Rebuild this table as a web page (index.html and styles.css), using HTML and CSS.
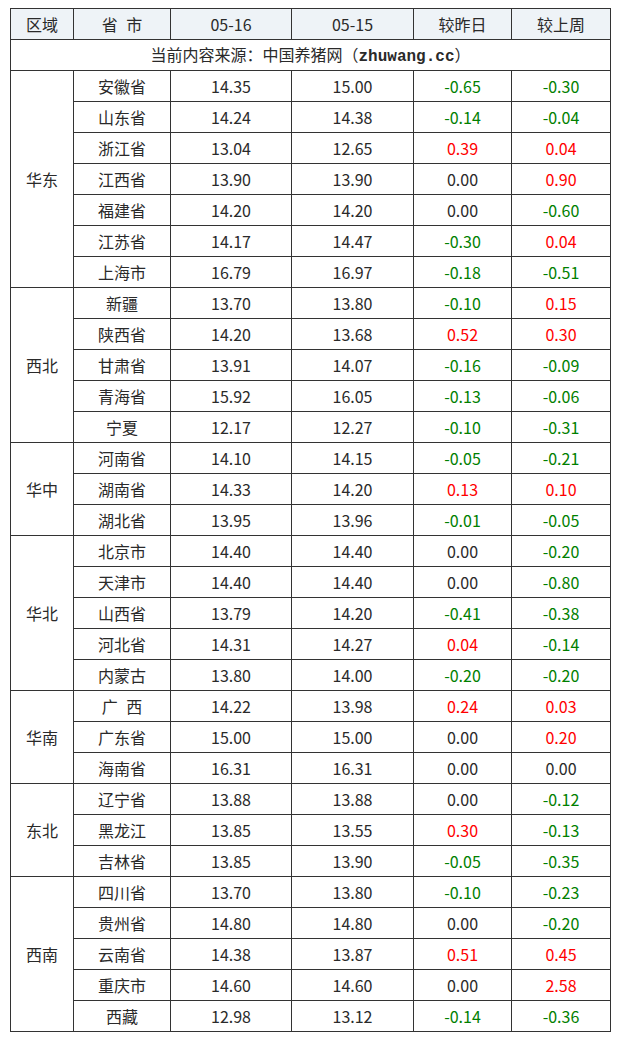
FILE: index.html
```html
<!DOCTYPE html>
<html lang="zh-CN">
<head>
<meta charset="utf-8">
<title>生猪价格</title>
<link rel="stylesheet" href="styles.css">
</head>
<body>
<div class="wrap">
<table class="price">
<colgroup>
<col class="c-region"><col class="c-prov"><col class="c-d1"><col class="c-d2"><col class="c-ch"><col class="c-wk">
</colgroup>
<thead>
<tr class="head"><th>区域</th><th>省 市</th><th>05-16</th><th>05-15</th><th>较昨日</th><th>较上周</th></tr>
</thead>
<tbody>
<tr><td colspan="6" class="source">当前内容来源：中国养猪网（<b class="site">zhuwang.cc</b>）</td></tr>

<tr><td rowspan="7" class="region">华东</td><td>安徽省</td><td>14.35</td><td>15.00</td><td class="down">-0.65</td><td class="down">-0.30</td></tr>
<tr><td>山东省</td><td>14.24</td><td>14.38</td><td class="down">-0.14</td><td class="down">-0.04</td></tr>
<tr><td>浙江省</td><td>13.04</td><td>12.65</td><td class="up">0.39</td><td class="up">0.04</td></tr>
<tr><td>江西省</td><td>13.90</td><td>13.90</td><td>0.00</td><td class="up">0.90</td></tr>
<tr><td>福建省</td><td>14.20</td><td>14.20</td><td>0.00</td><td class="down">-0.60</td></tr>
<tr><td>江苏省</td><td>14.17</td><td>14.47</td><td class="down">-0.30</td><td class="up">0.04</td></tr>
<tr><td>上海市</td><td>16.79</td><td>16.97</td><td class="down">-0.18</td><td class="down">-0.51</td></tr>

<tr><td rowspan="5" class="region">西北</td><td>新疆</td><td>13.70</td><td>13.80</td><td class="down">-0.10</td><td class="up">0.15</td></tr>
<tr><td>陕西省</td><td>14.20</td><td>13.68</td><td class="up">0.52</td><td class="up">0.30</td></tr>
<tr><td>甘肃省</td><td>13.91</td><td>14.07</td><td class="down">-0.16</td><td class="down">-0.09</td></tr>
<tr><td>青海省</td><td>15.92</td><td>16.05</td><td class="down">-0.13</td><td class="down">-0.06</td></tr>
<tr><td>宁夏</td><td>12.17</td><td>12.27</td><td class="down">-0.10</td><td class="down">-0.31</td></tr>

<tr><td rowspan="3" class="region">华中</td><td>河南省</td><td>14.10</td><td>14.15</td><td class="down">-0.05</td><td class="down">-0.21</td></tr>
<tr><td>湖南省</td><td>14.33</td><td>14.20</td><td class="up">0.13</td><td class="up">0.10</td></tr>
<tr><td>湖北省</td><td>13.95</td><td>13.96</td><td class="down">-0.01</td><td class="down">-0.05</td></tr>

<tr><td rowspan="5" class="region">华北</td><td>北京市</td><td>14.40</td><td>14.40</td><td>0.00</td><td class="down">-0.20</td></tr>
<tr><td>天津市</td><td>14.40</td><td>14.40</td><td>0.00</td><td class="down">-0.80</td></tr>
<tr><td>山西省</td><td>13.79</td><td>14.20</td><td class="down">-0.41</td><td class="down">-0.38</td></tr>
<tr><td>河北省</td><td>14.31</td><td>14.27</td><td class="up">0.04</td><td class="down">-0.14</td></tr>
<tr><td>内蒙古</td><td>13.80</td><td>14.00</td><td class="down">-0.20</td><td class="down">-0.20</td></tr>

<tr><td rowspan="3" class="region">华南</td><td>广 西</td><td>14.22</td><td>13.98</td><td class="up">0.24</td><td class="up">0.03</td></tr>
<tr><td>广东省</td><td>15.00</td><td>15.00</td><td>0.00</td><td class="up">0.20</td></tr>
<tr><td>海南省</td><td>16.31</td><td>16.31</td><td>0.00</td><td>0.00</td></tr>

<tr><td rowspan="3" class="region">东北</td><td>辽宁省</td><td>13.88</td><td>13.88</td><td>0.00</td><td class="down">-0.12</td></tr>
<tr><td>黑龙江</td><td>13.85</td><td>13.55</td><td class="up">0.30</td><td class="down">-0.13</td></tr>
<tr><td>吉林省</td><td>13.85</td><td>13.90</td><td class="down">-0.05</td><td class="down">-0.35</td></tr>

<tr><td rowspan="5" class="region">西南</td><td>四川省</td><td>13.70</td><td>13.80</td><td class="down">-0.10</td><td class="down">-0.23</td></tr>
<tr><td>贵州省</td><td>14.80</td><td>14.80</td><td>0.00</td><td class="down">-0.20</td></tr>
<tr><td>云南省</td><td>14.38</td><td>13.87</td><td class="up">0.51</td><td class="up">0.45</td></tr>
<tr><td>重庆市</td><td>14.60</td><td>14.60</td><td>0.00</td><td class="up">2.58</td></tr>
<tr><td>西藏</td><td>12.98</td><td>13.12</td><td class="down">-0.14</td><td class="down">-0.36</td></tr>
</tbody>
</table>
</div>
</body>
</html>
```

FILE: styles.css
```css
html, body {
  margin: 0;
  padding: 0;
  background: #ffffff;
}

.wrap {
  padding: 8px 0 0 10px;
}

.price {
  border-collapse: collapse;
  table-layout: fixed;
  width: 600px;
  font-family: "Noto Sans CJK SC", "Noto Sans", sans-serif;
  font-size: 16px;
  font-weight: 400;
  color: #2a2a2a;
  border: 1px solid #333333;
}

.c-region { width: 63px; }
.c-prov { width: 97px; }
.c-d1 { width: 121px; }
.c-d2 { width: 122px; }
.c-ch { width: 98px; }
.c-wk { width: 99px; }

.price th,
.price td {
  border: 1px solid #333333;
  height: 30px;
  padding: 0;
  text-align: center;
  vertical-align: middle;
  line-height: 20px;
  font-weight: 400;
  word-spacing: 5px;
}

.head th {
  background: #eef3f7;
}

.site {
  font-family: "Liberation Mono", "DejaVu Sans Mono", monospace;
  font-weight: bold;
  font-size: 16px;
}

.up {
  color: #ff0000;
}

.down {
  color: #008000;
}
```
